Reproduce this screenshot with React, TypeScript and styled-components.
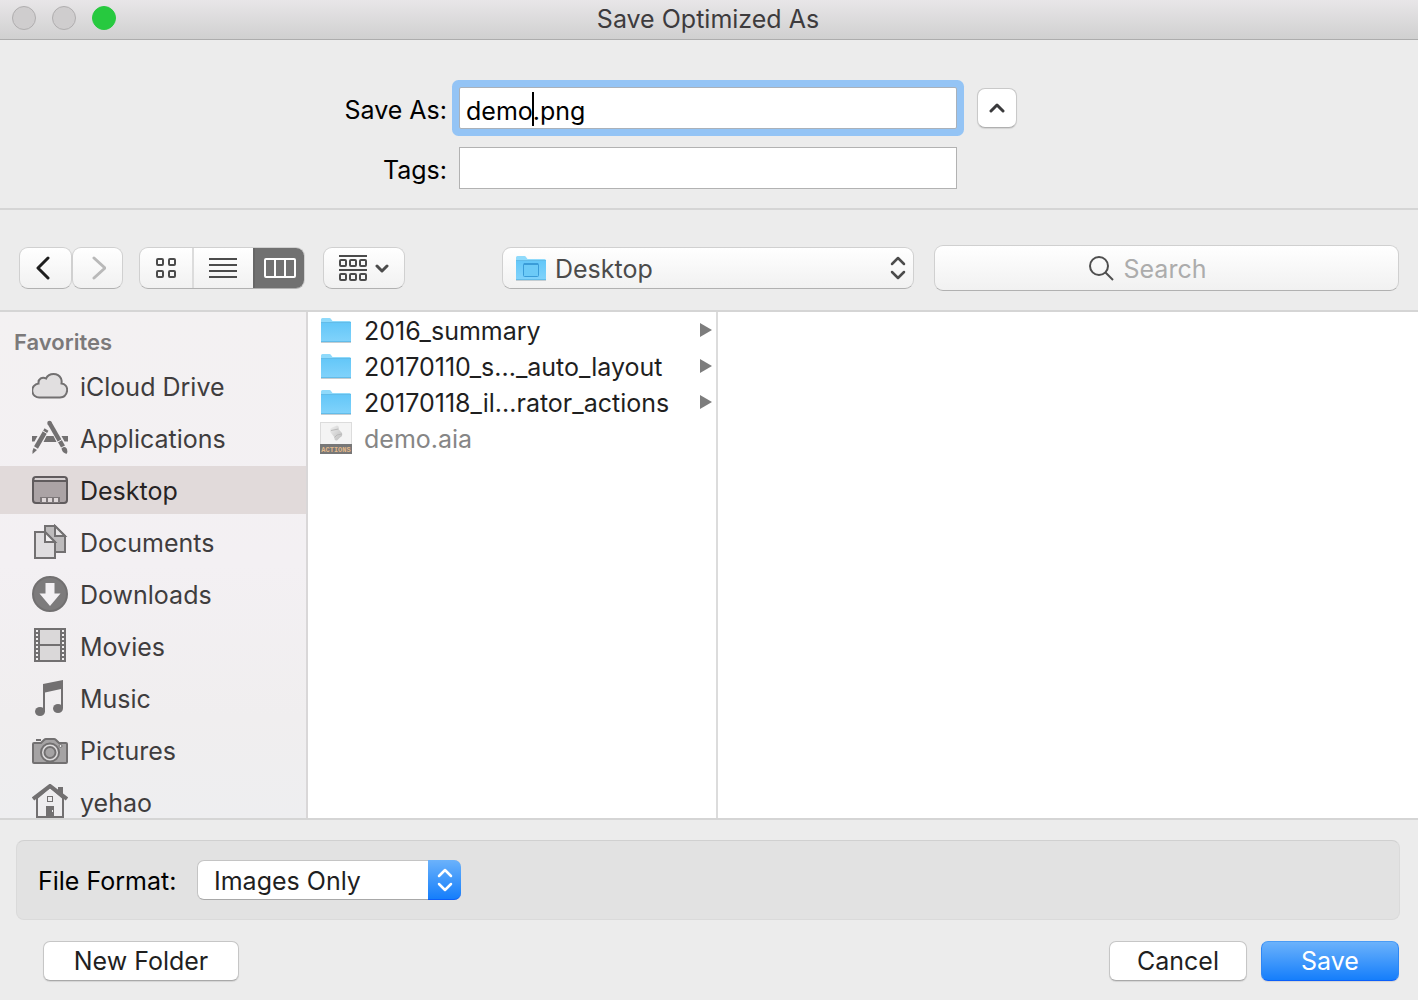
import React from "react";
import styled, { createGlobalStyle, css } from "styled-components";

const GlobalStyle = createGlobalStyle`
  *, *::before, *::after { box-sizing: border-box; }
  body {
    margin: 0;
    background: #ececec;
    font-family: Inter, "Liberation Sans", sans-serif;
    font-size: 25px;
    line-height: 32px;
    color: #000;
  }
  button, input, select { font: inherit; color: inherit; margin: 0; }
  svg { display: block; flex: none; }
`;

const Dialog = styled.main`
  display: flex;
  flex-direction: column;
  height: 100vh;
  background: #ececec;
`;

/* ---------- title bar ---------- */

const TitleBar = styled.header`
  display: grid;
  grid-template-columns: 1fr auto 1fr;
  align-items: center;
  flex: none;
  height: 40px;
  padding: 0 14px 3px 12px;
  background: linear-gradient(#e8e6e8, #d0d0d0);
  border-bottom: 1px solid #adadad;
`;

const TrafficLights = styled.div`
  display: flex;
  gap: 16px;
`;

const TrafficLight = styled.button<{ $active?: boolean }>`
  width: 24px;
  height: 24px;
  padding: 0;
  border-radius: 50%;
  border: 1px solid ${(p) => (p.$active ? "#27c93f" : "#b0aeaf")};
  background: ${(p) => (p.$active ? "#27c93f" : "#cfcdce")};
`;

const Title = styled.h1`
  margin: 0;
  padding-top: 1px;
  font-size: 25px;
  font-weight: 400;
  color: #3d3b3d;
`;

/* ---------- name and tags ---------- */

const NameForm = styled.section`
  display: grid;
  grid-template-columns: 1fr 498px 1fr;
  column-gap: 12px;
  row-gap: 18px;
  align-items: center;
  flex: none;
  padding: 47px 2px 19px 0;
  border-bottom: 2px solid #d5d5d5;
`;

const FieldLabel = styled.label`
  grid-column: 1;
  padding-top: 4px;
  text-align: right;
`;

const FieldBox = styled.div`
  position: relative;
  grid-column: 2;
`;

const TextField = styled.input<{ $focused?: boolean }>`
  display: block;
  width: 100%;
  height: 42px;
  padding: 5px 6px 0;
  border: 1px solid #b2b2b2;
  border-radius: 0;
  outline: none;
  background: #fff;
  ${(p) =>
    p.$focused &&
    css`
      border-color: #a9b1ba;
      box-shadow: 0 0 0 7px #94c4f5;
      border-radius: 2px;
    `}
`;

const Caret = styled.span`
  position: absolute;
  left: 73px;
  top: 5px;
  width: 2px;
  height: 34px;
  background: #000;
`;

const CollapseButton = styled.button`
  display: flex;
  align-items: center;
  justify-content: center;
  width: 40px;
  height: 40px;
  margin-left: 8px;
  padding: 0;
  border: 1px solid #c9c9c9;
  border-bottom-color: #b0b0b0;
  border-radius: 8px;
  background: #fff;
  box-shadow: 0 1px 1px #0000001a;
`;

/* ---------- toolbar ---------- */

const Toolbar = styled.nav`
  display: flex;
  align-items: center;
  flex: none;
  padding: 35px 19px 19px;
  border-bottom: 2px solid #d5d5d5;
`;

const raised = css`
  border: 1px solid #d0d0d0;
  border-bottom-color: #b1b1b1;
  border-radius: 9px;
  background: linear-gradient(#fff, #f1f1f1);
`;

const ToolButton = styled.button<{ $width: number }>`
  ${raised}
  display: flex;
  align-items: center;
  justify-content: center;
  gap: 8px;
  width: ${(p) => p.$width}px;
  height: 42px;
  padding: 0;
`;

const NavGroup = styled.div`
  display: flex;
  margin-right: 16px;
`;

const ViewGroup = styled.div`
  ${raised}
  display: flex;
  height: 42px;
  margin-right: 18px;
  overflow: hidden;
`;

const ViewButton = styled.button<{ $width: number; $selected?: boolean }>`
  display: flex;
  align-items: center;
  justify-content: center;
  width: ${(p) => p.$width}px;
  padding: 0;
  border: 0;
  background: ${(p) => (p.$selected ? "#717171" : "transparent")};
  &:not(:first-child) {
    border-left: 2px solid ${(p) => (p.$selected ? "#676767" : "#dcdcdc")};
  }
`;

const LocationBox = styled.div`
  position: relative;
  flex: 412 1 0;
  margin: 0 20px 0 97px;
`;

const LocationSelect = styled.select`
  ${raised}
  appearance: none;
  display: block;
  width: 100%;
  height: 42px;
  padding: 2px 40px 0 52px;
  color: #4b4b4b;
`;

const Overlay = styled.span<{ $left?: number; $right?: number; $top: number }>`
  position: absolute;
  top: ${(p) => p.$top}px;
  left: ${(p) => (p.$left === undefined ? "auto" : p.$left + "px")};
  right: ${(p) => (p.$right === undefined ? "auto" : p.$right + "px")};
  pointer-events: none;
`;

const SearchBox = styled.label`
  ${raised}
  display: flex;
  flex: 463 1 0;
  align-items: center;
  justify-content: center;
  gap: 10px;
  height: 46px;
`;

const SearchInput = styled.input`
  width: 122px;
  padding: 2px 0 0;
  border: 0;
  outline: none;
  background: none;
  &::placeholder {
    color: #acacac;
    opacity: 1;
  }
`;

/* ---------- browser ---------- */

const Browser = styled.div`
  display: flex;
  flex: 1;
  min-height: 0;
  background: #fff;
  border-bottom: 2px solid #d5d5d5;
`;

const Sidebar = styled.aside`
  flex: none;
  width: 308px;
  overflow: hidden;
  background: linear-gradient(#f3f1f2, #f3f0f3 50%, #f0eeef 80%, #eeeef0);
  border-right: 2px solid #d9d7d8;
`;

const SidebarHeading = styled.h2`
  margin: 0;
  padding: 14px 14px 4px;
  font-size: 22px;
  line-height: 32px;
  font-weight: 600;
  color: #7b797a;
`;

const SidebarList = styled.ul`
  display: flex;
  flex-direction: column;
  gap: 4px;
  margin: 0;
  padding: 0;
  list-style: none;
`;

const SidebarLink = styled.a<{ $selected?: boolean }>`
  display: flex;
  align-items: center;
  gap: 12px;
  height: 48px;
  padding-left: 32px;
  text-decoration: none;
  color: ${(p) => (p.$selected ? "#262324" : "#3f3d3e")};
  background: ${(p) => (p.$selected ? "#e1dada" : "transparent")};
`;

const SidebarText = styled.span`
  padding-top: 2px;
`;

const FileColumn = styled.ul`
  flex: none;
  width: 410px;
  margin: 0;
  padding: 0;
  list-style: none;
  border-right: 2px solid #dcdcdc;
`;

const FileRow = styled.li<{ $disabled?: boolean }>`
  display: flex;
  align-items: center;
  gap: 12px;
  height: 36px;
  padding: 0 4px 0 12px;
  color: ${(p) => (p.$disabled ? "#868686" : "#1f1f1f")};
`;

const FileName = styled.span`
  flex: 1;
  padding-top: 2px;
  white-space: nowrap;
`;

/* ---------- footer ---------- */

const Footer = styled.footer`
  flex: none;
  padding: 20px 19px 19px 16px;
`;

const FormatPanel = styled.div`
  display: flex;
  align-items: center;
  height: 80px;
  margin-right: -1px;
  padding: 0 21px;
  border: 1px solid #dadada;
  border-top-color: #d0d0d0;
  border-radius: 8px;
  background: #e2e2e2;
`;

const FormatLabel = styled.label`
  width: 159px;
  padding-top: 2px;
`;

const FormatBox = styled.div`
  position: relative;
  width: 264px;
`;

const FormatSelect = styled.select`
  appearance: none;
  display: block;
  width: 100%;
  height: 40px;
  padding: 2px 40px 0 16px;
  border: 1px solid #c4c4c4;
  border-bottom-color: #a8a8a8;
  border-radius: 7px;
  background: #fff;
  color: #1f1f1f;
`;

const FormatStepper = styled.span`
  position: absolute;
  top: 0;
  right: 0;
  display: flex;
  align-items: center;
  justify-content: center;
  width: 33px;
  height: 40px;
  border-radius: 0 7px 7px 0;
  background: linear-gradient(#6bb2fb, #157efb);
  border-bottom: 1px solid #0b5ffa;
  pointer-events: none;
`;

const Actions = styled.div`
  display: flex;
  gap: 14px;
  margin-top: 21px;
  padding-left: 27px;
`;

const PushButton = styled.button<{ $primary?: boolean; $width: number }>`
  width: ${(p) => p.$width}px;
  height: 40px;
  padding: 0;
  border: 1px solid #c6c6c6;
  border-bottom-color: #a9a9a9;
  border-radius: 7px;
  background: #fff;
  color: #1f1f1f;
  box-shadow: 0 1px 1px #0000001a;
  ${(p) =>
    p.$primary &&
    css`
      border-color: #4a9cf5 #2e87f5 #0b5ffa;
      background: linear-gradient(#6bb2fb, #157efb);
      color: #fff;
    `}
`;

const Spacer = styled.div`
  flex: 1;
`;

/* ---------- icons ---------- */

const GREY = "#727071";

const Folder = ({ desktop }: { desktop?: boolean }) => (
  <svg width="32" height="28" viewBox="0 0 32 28">
    <defs>
      <linearGradient id="folderFill" x1="0" y1="0" x2="0" y2="1">
        <stop offset="0" stopColor="#64c7f8" />
        <stop offset="1" stopColor="#7fd2fb" />
      </linearGradient>
    </defs>
    <path d="M1 26.500H31" stroke="#c4cdd2" />
    <path d="M1 3.500Q1 2 2.500 2H9.500Q10.500 2 11 3L12.500 5H29.500Q31 5 31 6.500V25H1Z" fill="#8fdafb" />
    <path d="M1 7H31V25H1Z" fill="url(#folderFill)" />
    <path d="M1 6.500H31M1 25.500H31" stroke="#62bce9" />
    {desktop && (
      <>
        <rect x="8.500" y="9.500" width="15" height="13" rx="1" fill="#6ccaf7" stroke="#3a9cd8" />
        <path d="M9 9H23V11H9Z" fill="#3a9cd8" />
      </>
    )}
  </svg>
);

const ActionsFile = () => (
  <svg width="32" height="32" viewBox="0 0 32 32">
    <defs>
      <linearGradient id="scroll" x1="0" y1="0" x2="1" y2="1">
        <stop offset="0" stopColor="#f0f0f0" />
        <stop offset="1" stopColor="#bcbcbc" />
      </linearGradient>
    </defs>
    <rect x="0.500" y="0.500" width="31" height="31" fill="#f4f4f4" stroke="#dcdcdc" />
    <path d="M10 8Q10 6 12 5.500L17 3.500Q19.500 4 18.500 7L22 11Q23 14 20 15.500L17 18.500Q14 19 14.500 15.500L11 11Q9.500 9.500 10 8Z" fill="url(#scroll)" />
    <path d="M11 8.500L16 7.500L18.500 7M14.500 15.500L17 13L22 12" fill="none" stroke="#b9b9b9" />
    <rect y="22" width="32" height="10" fill="#777" />
    <text x="16" y="30" textAnchor="middle" fontFamily="Liberation Mono, monospace" fontWeight="700" fontSize="7" fill="#e2b98a">
      ACTIONS
    </text>
  </svg>
);

const Triangle = () => (
  <svg width="12" height="14" viewBox="0 0 12 14">
    <path d="M0 0L12 7L0 14Z" fill="#7d7d7d" />
  </svg>
);

const Chevrons = ({ color }: { color: string }) => (
  <svg width="16" height="26" viewBox="0 0 16 26" fill="none" stroke={color} strokeWidth="2.500" strokeLinecap="round" strokeLinejoin="round">
    <path d="M2 9L8 3L14 9M2 17L8 23L14 17" />
  </svg>
);

const NavArrow = ({ forward }: { forward?: boolean }) => (
  <svg width={forward ? 16 : 20} height="26" viewBox={forward ? "0 0 16 26" : "0 0 20 26"} fill="none" stroke={forward ? "#b9b9b9" : "#1e1e1e"} strokeWidth="3" strokeLinecap="round" strokeLinejoin="round">
    <path d={forward ? "M4 3L15 13L4 23" : "M12 3L2 13L12 23"} />
  </svg>
);

const GridIcon = () => (
  <svg width="20" height="20" viewBox="0 0 20 20" fill="none" stroke="#4b4b4b" strokeWidth="2">
    {[1, 13].map((y) => [1, 13].map((x) => <rect key={`${x}-${y}`} x={x} y={y} width="6" height="6" rx="1" />))}
  </svg>
);

const ListIcon = () => (
  <svg width="30" height="20" viewBox="0 0 30 20" stroke="#4b4b4b" strokeWidth="2">
    <path d="M0 1H28M0 7H28M0 13H28M0 19H28" />
  </svg>
);

const ColumnsIcon = () => (
  <svg width="32" height="20" viewBox="0 0 32 20" fill="none" stroke="#fff" strokeWidth="2">
    <rect x="1" y="1" width="30" height="18" rx="1" />
    <path d="M11 1V19M21 1V19" />
  </svg>
);

const ArrangeIcon = () => (
  <svg width="28" height="26" viewBox="0 0 28 26" fill="none" stroke="#4b4b4b" strokeWidth="2">
    <path d="M0 1H28M0 15H28" />
    {[5, 19].map((y) => [1, 11, 21].map((x) => <rect key={`${x}-${y}`} x={x} y={y} width="6" height="6" rx="1" />))}
  </svg>
);

const SmallChevron = ({ up }: { up?: boolean }) => (
  <svg width={up ? 16 : 14} height="10" viewBox={up ? "0 0 16 10" : "0 0 14 10"} fill="none" stroke={up ? "#3a3a3c" : "#4b4b4b"} strokeWidth="3" strokeLinecap="round" strokeLinejoin="round">
    <path d={up ? "M2 8L8 2L14 8" : "M2 3L7 8L12 3"} />
  </svg>
);

const SearchIcon = () => (
  <svg width="26" height="26" viewBox="0 0 26 26" fill="none" stroke="#4f4f4f" strokeWidth="2">
    <circle cx="11" cy="11" r="9" />
    <path d="M17.500 17.500L25 25" />
  </svg>
);

const SideIcon = ({ children }: { children: React.ReactNode }) => (
  <svg width="36" height="36" viewBox="0 0 36 36" fill="none" stroke={GREY} strokeWidth="2">
    {children}
  </svg>
);

const CloudIcon = () => (
  <SideIcon>
    <path d="M8 29.500A7 7 0 0 1 6.500 15.500C6 10.500 10.500 8.500 14 10.500C17 4.500 26 4.500 29 10.500Q30 13 29.500 15.500C33 16 35.200 18.800 35.200 22Q34.500 29 28 29.500Z" fill="#e1dfe0" />
  </SideIcon>
);

const ApplicationsIcon = () => (
  <SideIcon>
    <path d="M0 16H5.500L2.500 21.500H0ZM14.500 16H21.500L24.500 22H11.500ZM29.500 16H36V21.500H32.500Z" fill={GREY} stroke="none" />
    <path d="M14.500 9.500L4 27.500" strokeWidth="4.500" />
    <path d="M11 11L15 13.500" stroke="#f3f1f3" strokeWidth="1" />
    <path d="M1.500 28L5 30L0.500 34Q0 31 1.500 28Z" fill={GREY} stroke="none" />
    <path d="M17.500 3L31 26.500" strokeWidth="4.500" />
    <circle cx="17.500" cy="3" r="2.250" fill={GREY} stroke="none" />
    <path d="M25 22.500L30 19.500" stroke="#f3f1f3" strokeWidth="1" />
    <path d="M29.500 28.500Q33 25.500 35 29Q36 32 34.500 34Q30 32.500 29.500 28.500Z" fill={GREY} stroke="none" />
  </SideIcon>
);

const DesktopIcon = () => (
  <SideIcon>
    <rect x="1" y="5" width="34" height="26" rx="3" fill="#aba3a5" stroke="#605b5d" />
    <path d="M3 7H33" stroke="#d5cfd0" />
    <path d="M1 9H35" stroke="#605b5d" />
    <rect x="8" y="25" width="20" height="6" fill="#7d7779" stroke="none" />
    <path d="M10 26H14V30H10ZM16 26H20V30H16ZM22 26H26V30H22Z" fill="#ded7d8" stroke="none" />
  </SideIcon>
);

const DocumentsIcon = () => (
  <SideIcon>
    <path d="M13 2H23L33 12V28H13Z" fill="#bdbbbc" />
    <path d="M23 2V12H33Z" fill="#e8e6e7" />
    <path d="M3 8H13L23 18V34H3Z" fill="#dfdddf" />
    <path d="M13 8V18H23Z" fill="#f4f2f3" />
  </SideIcon>
);

const DownloadsIcon = () => (
  <SideIcon>
    <circle cx="18" cy="18" r="17" fill="#7d7b7c" />
    <path d="M13.500 7H22.500V17.500H28.500L18 30L7.500 17.500H13.500Z" fill="#f4f1f4" stroke="none" />
  </SideIcon>
);

const MoviesIcon = () => (
  <SideIcon>
    <rect x="2" y="0" width="32" height="34" fill={GREY} stroke="none" />
    <path d="M8 2H28V16H8ZM8 18H28V32H8Z" fill="#dad8d9" stroke="none" />
    <path d="M5 2V33M31 2V33" stroke="#f1eff0" strokeDasharray="2 2" />
  </SideIcon>
);

const MusicIcon = () => (
  <SideIcon>
    <path d="M11 4L31 0V28H29V9L13 12.500V32H11Z" fill={GREY} stroke="none" />
    <ellipse cx="8" cy="31.500" rx="5" ry="4.500" fill={GREY} stroke="none" />
    <ellipse cx="26" cy="28.500" rx="5" ry="4.500" fill={GREY} stroke="none" />
  </SideIcon>
);

const PicturesIcon = () => (
  <SideIcon>
    <path d="M4 8H9" />
    <path d="M2 11H9L12 8Q13 7 14 7H22Q23 7 24 8L27 11H34Q35 11 35 12V30Q35 31 34 31H2Q1 31 1 30V12Q1 11 2 11Z" fill="#a5a3a4" />
    <circle cx="18" cy="20.500" r="9" fill="#dddbdc" />
    <circle cx="18" cy="20.500" r="5.500" fill="#a5a3a4" />
    <circle cx="28.500" cy="14" r="1.500" fill="#eee" strokeWidth="1" />
  </SideIcon>
);

const HomeIcon = () => (
  <SideIcon>
    <path d="M5 14V33H31V14L18 3Z" fill="#eeedef" />
    <path d="M26 3H31V12L26 8Z" fill={GREY} stroke="none" />
    <path d="M1 15L18 2L35 15" strokeWidth="4" />
    <rect x="15.500" y="12.500" width="5" height="5" strokeWidth="1" />
    <path d="M14 22H22V34H14Z" fill={GREY} stroke="none" />
    <path d="M20.500 26V28" stroke="#eee" strokeWidth="1" />
  </SideIcon>
);

/* ---------- data ---------- */

const places = [
  { name: "iCloud Drive", icon: <CloudIcon /> },
  { name: "Applications", icon: <ApplicationsIcon /> },
  { name: "Desktop", icon: <DesktopIcon />, selected: true },
  { name: "Documents", icon: <DocumentsIcon /> },
  { name: "Downloads", icon: <DownloadsIcon /> },
  { name: "Movies", icon: <MoviesIcon /> },
  { name: "Music", icon: <MusicIcon /> },
  { name: "Pictures", icon: <PicturesIcon /> },
  { name: "yehao", icon: <HomeIcon /> },
];

const files = [
  { name: "2016_summary", folder: true },
  { name: "20170110_s..._auto_layout", folder: true },
  { name: "20170118_il...rator_actions", folder: true },
  { name: "demo.aia", folder: false },
];

export default function App() {
  return (
    <>
      <GlobalStyle />
      <Dialog>
        <TitleBar>
          <TrafficLights>
            <TrafficLight aria-label="Close" />
            <TrafficLight aria-label="Minimize" />
            <TrafficLight aria-label="Zoom" $active />
          </TrafficLights>
          <Title>Save Optimized As</Title>
        </TitleBar>

        <NameForm>
          <FieldLabel htmlFor="file-name">Save As:</FieldLabel>
          <FieldBox>
            <TextField id="file-name" defaultValue="demo.png" $focused />
            <Caret />
          </FieldBox>
          <CollapseButton aria-label="Collapse">
            <SmallChevron up />
          </CollapseButton>
          <FieldLabel htmlFor="file-tags">Tags:</FieldLabel>
          <FieldBox>
            <TextField id="file-tags" />
          </FieldBox>
        </NameForm>

        <Toolbar>
          <NavGroup>
            <ToolButton $width={53} aria-label="Back">
              <NavArrow />
            </ToolButton>
            <ToolButton $width={51} aria-label="Forward">
              <NavArrow forward />
            </ToolButton>
          </NavGroup>
          <ViewGroup>
            <ViewButton $width={52} aria-label="Icons">
              <GridIcon />
            </ViewButton>
            <ViewButton $width={61} aria-label="List">
              <ListIcon />
            </ViewButton>
            <ViewButton $width={51} aria-label="Columns" $selected>
              <ColumnsIcon />
            </ViewButton>
          </ViewGroup>
          <ToolButton $width={82} aria-label="Arrange">
            <ArrangeIcon />
            <SmallChevron />
          </ToolButton>
          <LocationBox>
            <LocationSelect aria-label="Location">
              <option>Desktop</option>
            </LocationSelect>
            <Overlay $left={13} $top={7}>
              <Folder desktop />
            </Overlay>
            <Overlay $right={8} $top={8}>
              <Chevrons color="#4b4b4b" />
            </Overlay>
          </LocationBox>
          <SearchBox>
            <SearchIcon />
            <SearchInput placeholder="Search" aria-label="Search" />
          </SearchBox>
        </Toolbar>

        <Browser>
          <Sidebar>
            <SidebarHeading>Favorites</SidebarHeading>
            <SidebarList>
              {places.map((place) => (
                <li key={place.name}>
                  <SidebarLink href="#" $selected={place.selected}>
                    {place.icon}
                    <SidebarText>{place.name}</SidebarText>
                  </SidebarLink>
                </li>
              ))}
            </SidebarList>
          </Sidebar>
          <FileColumn>
            {files.map((file) => (
              <FileRow key={file.name} $disabled={!file.folder}>
                {file.folder ? <Folder /> : <ActionsFile />}
                <FileName>{file.name}</FileName>
                {file.folder && <Triangle />}
              </FileRow>
            ))}
          </FileColumn>
        </Browser>

        <Footer>
          <FormatPanel>
            <FormatLabel htmlFor="file-format">File Format:</FormatLabel>
            <FormatBox>
              <FormatSelect id="file-format">
                <option>Images Only</option>
              </FormatSelect>
              <FormatStepper>
                <Chevrons color="#fff" />
              </FormatStepper>
            </FormatBox>
          </FormatPanel>
          <Actions>
            <PushButton $width={196}>New Folder</PushButton>
            <Spacer />
            <PushButton $width={138}>Cancel</PushButton>
            <PushButton $width={138} $primary>
              Save
            </PushButton>
          </Actions>
        </Footer>
      </Dialog>
    </>
  );
}
